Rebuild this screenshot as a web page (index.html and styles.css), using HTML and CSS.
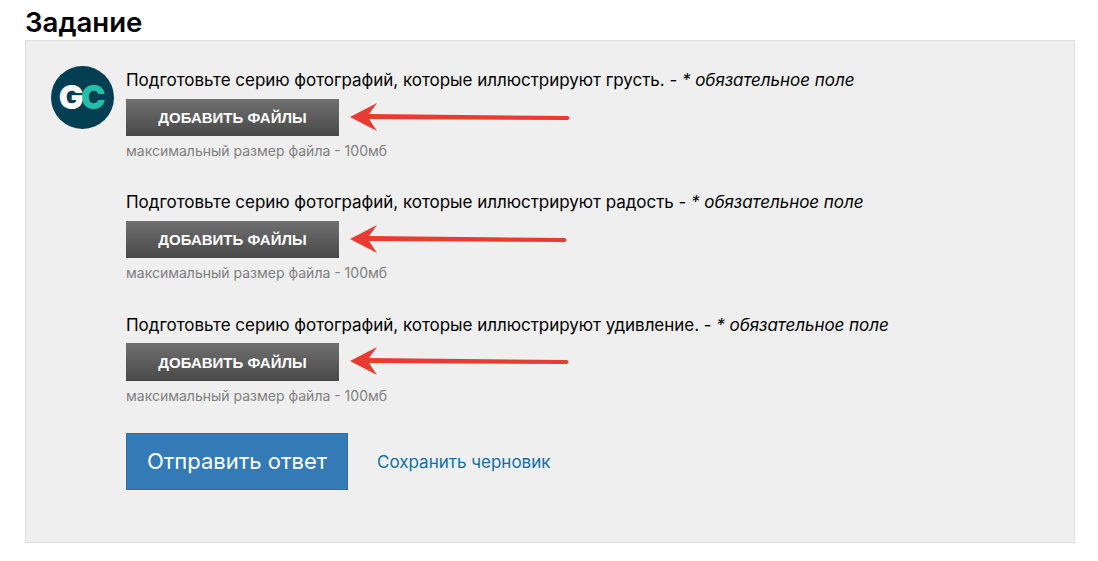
FILE: index.html
```html
<!DOCTYPE html>
<html lang="ru">
<head>
<meta charset="utf-8">
<title>Задание</title>
<link rel="stylesheet" href="styles.css">
</head>
<body>
<h1 class="title">Задание</h1>
<section class="panel">
  <div class="avatar"><span class="g">G</span><span class="c">C</span></div>
  <div class="content">
    <div class="field">
      <p class="question">Подготовьте серию фотографий, которые иллюстрируют грусть. - <em>* обязательное поле</em></p>
      <button class="upload" type="button">ДОБАВИТЬ ФАЙЛЫ</button>
      <p class="hint">максимальный размер файла - 100мб</p>
      <svg class="arrow" width="225" height="30" viewBox="0 0 225 30"><path d="M1 15 L28 1 L20 12 L219 14 Q222 16 219 18 L20 17 L28 29 Z"/></svg>
    </div>
    <div class="field">
      <p class="question">Подготовьте серию фотографий, которые иллюстрируют радость - <em>* обязательное поле</em></p>
      <button class="upload" type="button">ДОБАВИТЬ ФАЙЛЫ</button>
      <p class="hint">максимальный размер файла - 100мб</p>
      <svg class="arrow" width="225" height="30" viewBox="0 0 225 30"><path d="M1 15 L28 1 L20 12 L216 14 Q219 16 216 18 L20 17 L28 29 Z"/></svg>
    </div>
    <div class="field">
      <p class="question">Подготовьте серию фотографий, которые иллюстрируют удивление. - <em>* обязательное поле</em></p>
      <button class="upload" type="button">ДОБАВИТЬ ФАЙЛЫ</button>
      <p class="hint">максимальный размер файла - 100мб</p>
      <svg class="arrow" width="225" height="30" viewBox="0 0 225 30"><path d="M1 15 L28 1 L20 12 L218 14 Q221 16 218 18 L20 17 L28 29 Z"/></svg>
    </div>
    <div class="actions">
      <button class="submit" type="button">Отправить ответ</button>
      <a class="draft" href="#">Сохранить черновик</a>
    </div>
  </div>
</section>
</body>
</html>
```
FILE: styles.css
```css
* { box-sizing: border-box; }
html, body { margin: 0; background: #fff; }
body {
  padding: 8px 23px 0 25px;
  font-family: Inter, "Noto Sans", sans-serif;
  color: #000;
}
.title {
  margin: 0;
  height: 32px;
  font-size: 27.6px;
  line-height: 28px;
  font-weight: 600;
}
.panel {
  display: flex;
  align-items: flex-start;
  gap: 12px;
  height: 503px;
  padding: 25px 25px 0;
  background: #efefef;
  border: 1px solid #ddd;
}
.avatar {
  flex: none;
  width: 63px;
  height: 63px;
  padding-right: 3px;
  border-radius: 50%;
  background: #033e53;
  display: flex;
  align-items: center;
  justify-content: center;
  font-size: 33px;
  line-height: 63px;
  font-weight: 900;
  letter-spacing: -2.5px;
}
.g { color: #fff; }
.c { color: #22bfa8; }
.content { flex: 1; }
.field {
  position: relative;
  height: 122.4px;
}
.question {
  margin: 0 0 6.6px;
  font-size: 17px;
  line-height: 28px;
  height: 26px;
  letter-spacing: -0.035px;
}
.question em { font-style: italic; }
.upload {
  display: block;
  width: 213px;
  height: 37.4px;
  padding: 0;
  border: 0;
  background: linear-gradient(#707070, #484848);
  color: #fff;
  font-family: "Liberation Sans", sans-serif;
  font-size: 15px;
  font-weight: 700;
  text-align: center;
}
.hint {
  margin: 5.9px 0 0;
  font-size: 14px;
  line-height: 18px;
  color: #808080;
}
.arrow {
  position: absolute;
  left: 223px;
  top: 35.6px;
  fill: #e93b32;
}
.actions {
  display: flex;
  align-items: center;
  gap: 29px;
  margin-top: -0.2px;
}
.submit {
  width: 222px;
  height: 57px;
  padding: 0;
  background: #337ab7;
  border: 1px solid #2e6da4;
  color: #fff;
  font-family: inherit;
  font-size: 22px;
}
.draft {
  padding-top: 2px;
  font-size: 17px;
  color: #0f70a8;
  text-decoration: none;
}
```
